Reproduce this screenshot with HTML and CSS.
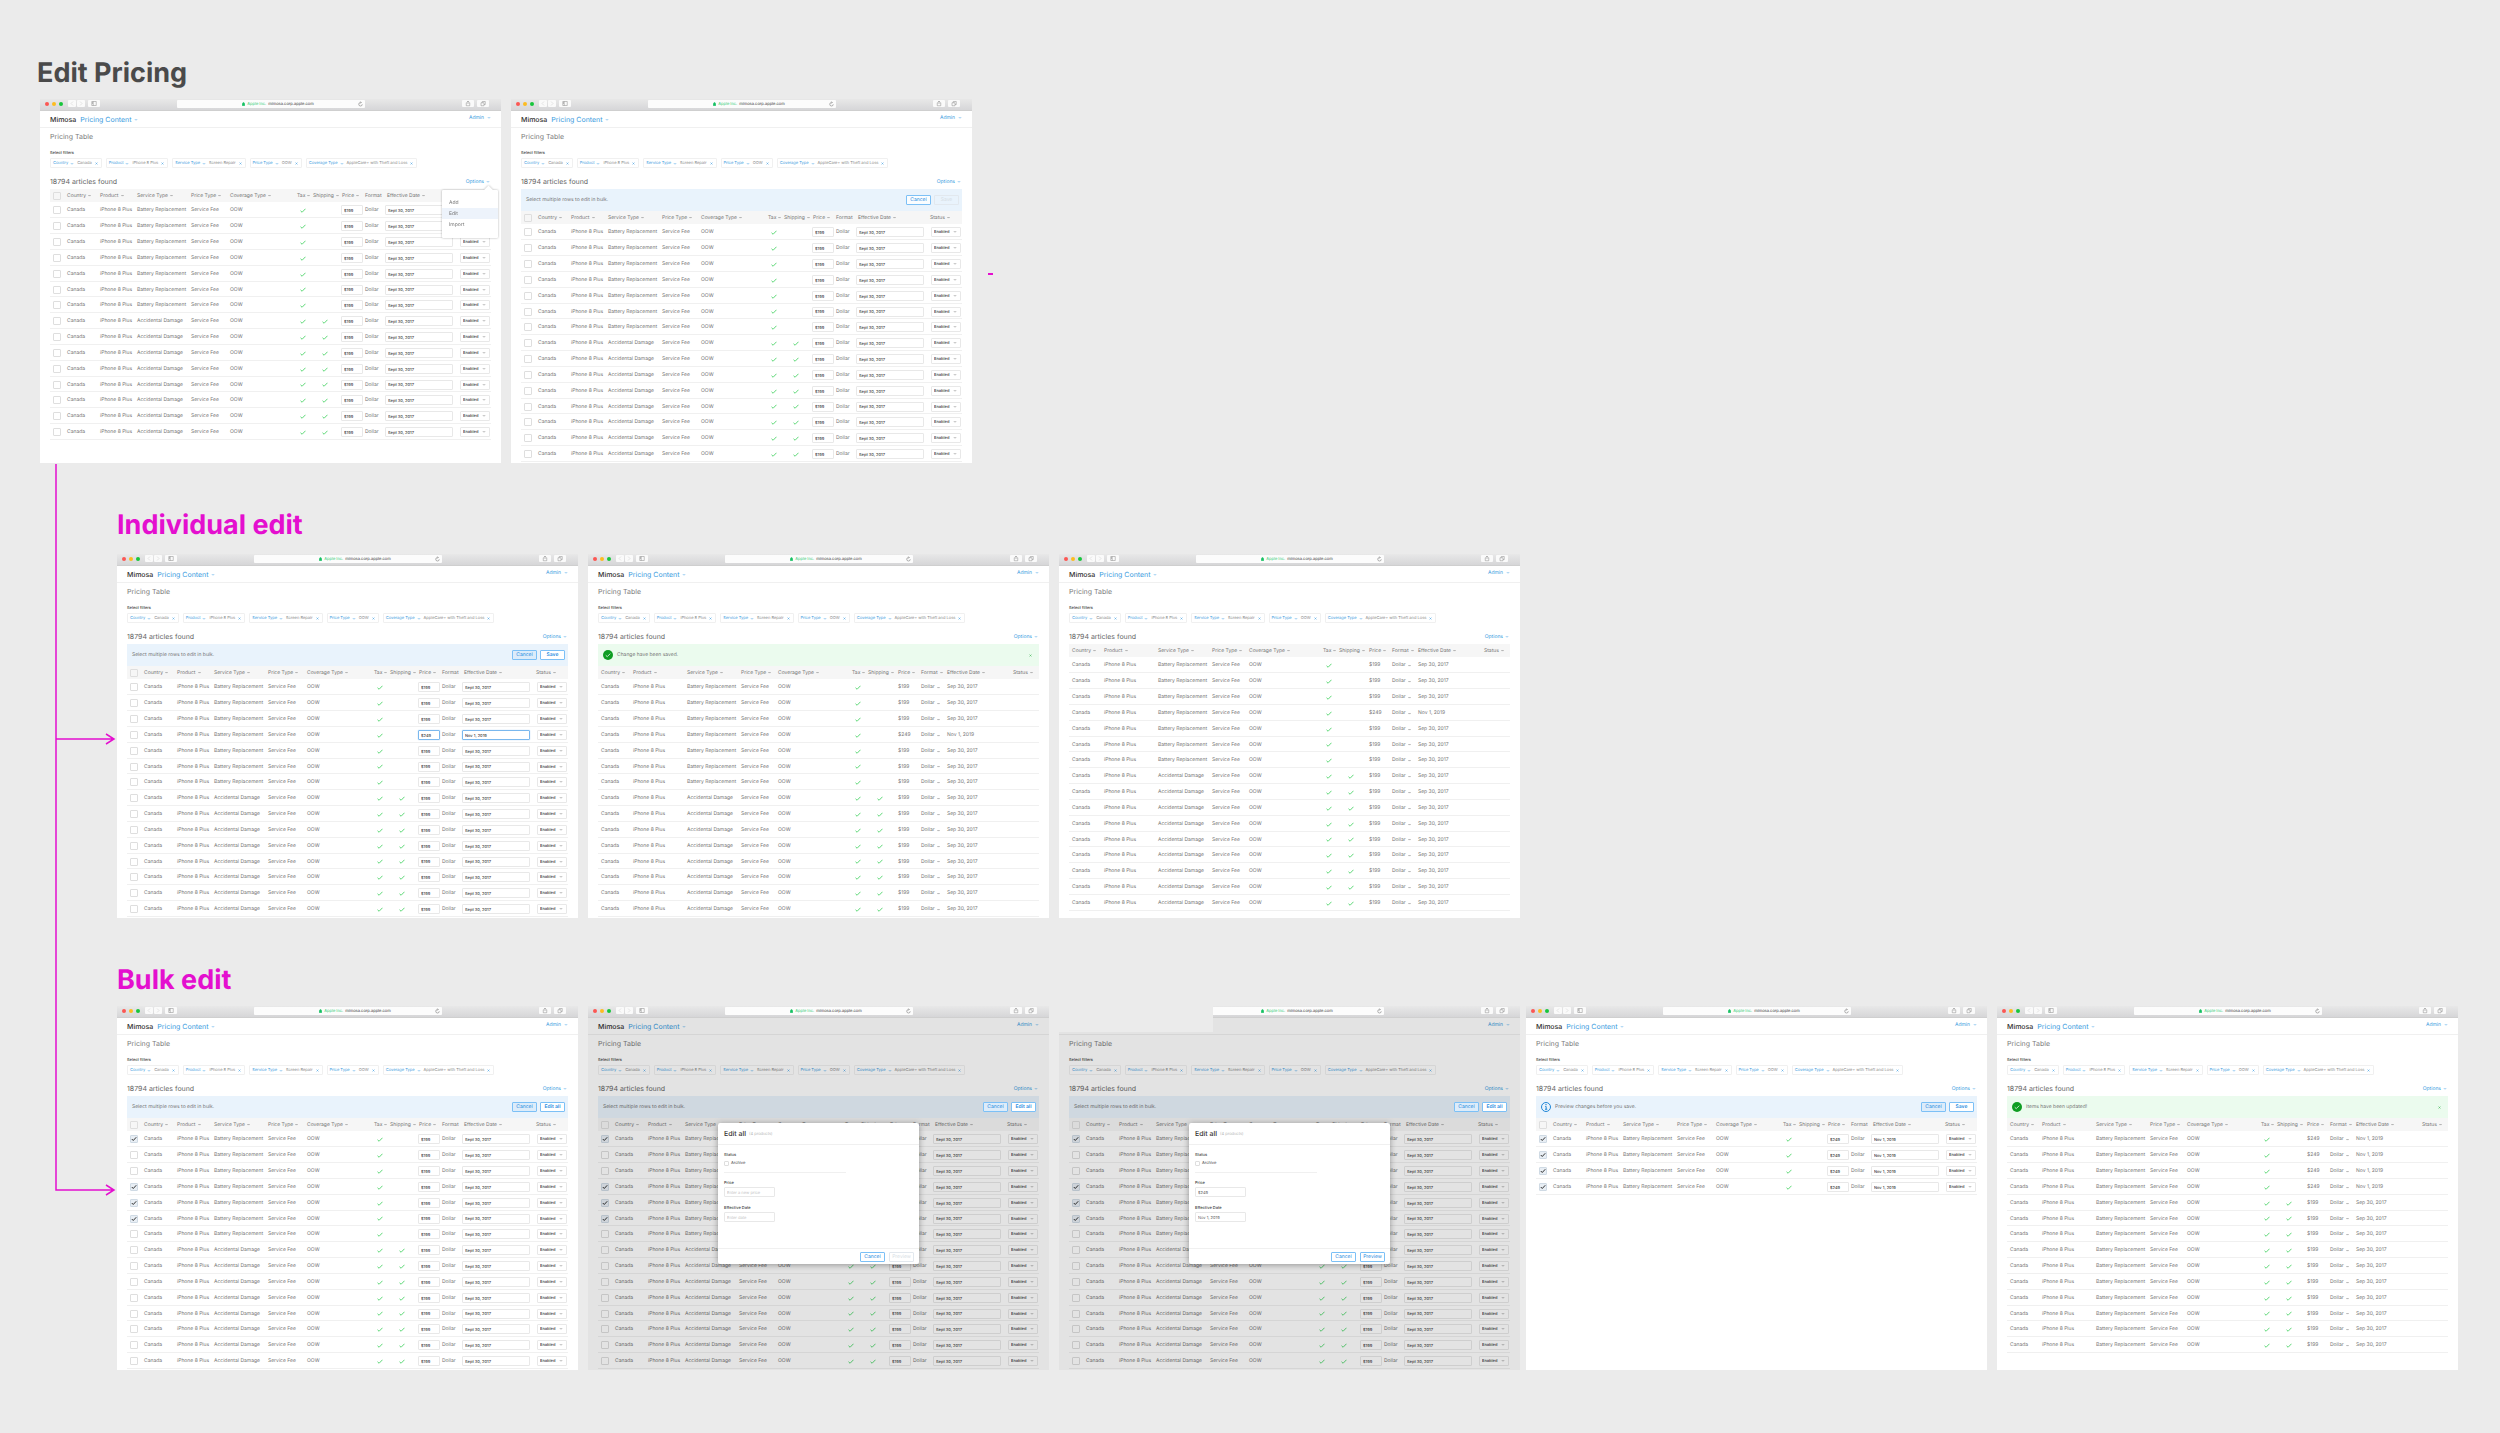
FILE: index.html
```html
<!DOCTYPE html>
<html lang="en">
<head>
<meta charset="utf-8">
<meta name="viewport" content="width=device-width, initial-scale=1">
<title>Edit Pricing</title>
<link rel="stylesheet" href="styles.css">
</head>
<body>
<svg class="sprite" aria-hidden="true">
  <symbol id="chevron" viewBox="0 0 8 6"><path d="M1.500 2l2.500 2.500L6.500 2"/></symbol>
  <symbol id="cross" viewBox="0 0 6 6"><path d="M1 1l4 4M5 1l-4 4"/></symbol>
  <symbol id="tick" viewBox="0 0 12 10"><path d="M1 5.500l3.200 3L11 1.500"/></symbol>
  <symbol id="back" viewBox="0 0 16 14"><path d="M10 3L6 7l4 4"/></symbol>
  <symbol id="forward" viewBox="0 0 16 14"><path d="M6 3l4 4-4 4"/></symbol>
  <symbol id="sidebar" viewBox="0 0 24 14"><path d="M7.500 3h9v8h-9zM10.500 3v8M8 5h2M8 7h2"/></symbol>
  <symbol id="share" viewBox="0 0 24 14"><path d="M10.500 5.500h-2v6h7v-6h-2M12 8V2M10 4l2-2 2 2"/></symbol>
  <symbol id="tabs" viewBox="0 0 24 14"><path d="M8 5.500h6v6H8zM10.500 5.500V3h6v6H14"/></symbol>
  <symbol id="lock" viewBox="0 0 6 8"><path d="M1.500 4V2.500a1.500 1.500 0 013 0V4"/><rect x="0.500" y="3.500" width="5" height="4" rx="0.500"/></symbol>
  <symbol id="reload" viewBox="0 0 10 12"><path d="M8.500 6.500a3.500 3.500 0 11-3.500-3.500h1M4.800 1l2 2-2 2"/></symbol>
  <symbol id="success" viewBox="0 0 20 20"><circle cx="10" cy="10" r="10" stroke="none"/><path d="M5.500 10.500l3 2.800 6-6" fill="none"/></symbol>
  <symbol id="info" viewBox="0 0 20 20"><circle cx="10" cy="10" r="9"/><path d="M8.500 9h1.800v5.200M8 14.500h4.500"/><circle cx="10" cy="5.500" r="0.600"/></symbol>
</svg>

<main class="canvas">
  <section class="flow flow--start">
    <h1 class="flow__title">Edit Pricing</h1>
    <div class="flow__screens">
      <article class="board" data-screen="options"></article>
      <article class="board" data-screen="selecting"></article>
      <span class="stub"></span>
    </div>
  </section>

  <section class="flow flow--individual">
    <h2 class="flow__title">Individual edit</h2>
    <div class="flow__screens">
      <article class="board" data-screen="editingOne"></article>
      <article class="board" data-screen="savedOne"></article>
      <article class="board" data-screen="listing"></article>
    </div>
  </section>

  <section class="flow flow--bulk">
    <h2 class="flow__title">Bulk edit</h2>
    <div class="flow__screens">
      <article class="board" data-screen="picked"></article>
      <article class="board" data-screen="bulkEmpty"></article>
      <article class="board board--covered" data-screen="bulkFilled"></article>
      <article class="board board--next" data-screen="preview"></article>
      <article class="board" data-screen="updated"></article>
    </div>
  </section>

  <svg class="connector" viewBox="0 0 62 732" aria-hidden="true">
    <path d="M2 0v726h58M2 275h58M52 270l8 5-8 5M52 721l8 5-8 5"/>
  </svg>
</main>
<script src="app.js"></script>
</body>
</html>
```

FILE: app.js
```js
const icon = (name) =>
  `<svg class="icon icon--${name}" aria-hidden="true"><use href="#${name}"/></svg>`;

const FILTERS = [
  ["Country", "Canada"],
  ["Product", "iPhone 8 Plus"],
  ["Service Type", "Screen Repair"],
  ["Price Type", "OOW"],
  ["Coverage Type", "AppleCare+ with Theft and Loss"],
];

const COLUMNS = [
  ["country", "Country"], ["product", "Product"], ["service", "Service Type"],
  ["type", "Price Type"], ["coverage", "Coverage Type"], ["tax", "Tax"],
  ["shipping", "Shipping"], ["price", "Price"], ["format", "Format"],
  ["date", "Effective Date"], ["status", "Status"],
];

const battery = (n, extra = {}) =>
  Array.from({ length: n }, () => ({ service: "Battery Replacement", ...extra }));
const damage = (n) =>
  Array.from({ length: n }, () => ({ service: "Accidental Damage", shipping: true }));
const CHANGED = { price: "$249", date: "Nov 1, 2019" };

const change = (rows, indexes, extra) =>
  rows.map((row, i) => (indexes.includes(i) ? { ...row, ...extra } : row));

const fifteen = [...battery(7), ...damage(8)];
const picked = change(fifteen, [0, 3, 4, 5], { checked: true });
const bulkHint = "Select multiple rows to edit in bulk.";

const SCREENS = {
  options: { edit: true, rows: fifteen, menu: true },
  selecting: { edit: true, rows: fifteen, banner: { text: bulkHint, action: "Save", disabled: true } },
  editingOne: {
    edit: true,
    rows: change(fifteen, [3], { ...CHANGED, focus: true }),
    banner: { text: bulkHint, action: "Save" },
  },
  savedOne: { rows: change(fifteen, [3], CHANGED), banner: { kind: "success", text: "Change have been saved." } },
  listing: { rows: change([...battery(7), ...damage(9)], [3], CHANGED) },
  picked: { edit: true, rows: picked, banner: { text: bulkHint, action: "Edit all" } },
  bulkEmpty: { edit: true, rows: picked, banner: { text: bulkHint, action: "Edit all" }, modal: { price: "", date: "" } },
  bulkFilled: { edit: true, rows: picked, banner: { text: bulkHint, action: "Edit all" }, modal: CHANGED },
  preview: {
    edit: true,
    rows: battery(4, { ...CHANGED, checked: true }),
    banner: { kind: "info", text: "Preview changes before you save.", action: "Save" },
  },
  updated: {
    rows: [...battery(4, CHANGED), ...battery(10, { shipping: true })],
    banner: { kind: "success", text: "Items have been updated!" },
  },
};

const chrome = () => `
  <div class="chrome">
    <div class="chrome__left">
      <span class="lights"><i class="light light--close"></i><i class="light light--min"></i><i class="light light--max"></i></span>
      <span class="chrome__nav">
        <button class="tool tool--small" aria-label="Back">${icon("back")}</button>
        <button class="tool tool--small" aria-label="Forward">${icon("forward")}</button>
      </span>
      <button class="tool" aria-label="Sidebar">${icon("sidebar")}</button>
    </div>
    <div class="address">
      ${icon("lock")}<span class="address__owner">Apple Inc.</span><span>mimosa.corp.apple.com</span>
      <button class="address__reload" aria-label="Reload">${icon("reload")}</button>
    </div>
    <div class="chrome__right">
      <button class="tool" aria-label="Share">${icon("share")}</button>
      <button class="tool" aria-label="Tabs">${icon("tabs")}</button>
    </div>
  </div>`;

const filter = ([name, value]) => `
  <li class="chip">
    <button class="link chip__name">${name}${icon("chevron")}</button>
    <span class="chip__value">${value}</span>
    <button class="link chip__remove" aria-label="Remove ${name}">${icon("cross")}</button>
  </li>`;

const menu = () => `
  <div class="menu">
    <button class="menu__item">Add</button>
    <button class="menu__item menu__item--active">Edit</button>
    <button class="menu__item">Import</button>
  </div>`;

const banner = ({ kind = "hint", text, action, disabled }) => `
  <div class="banner banner--${kind}">
    ${kind === "hint" ? "" : icon(kind)}
    <p class="banner__text">${text}</p>
    ${action
      ? `<div class="actions">
          <button class="button button--tint${disabled ? " button--plain" : ""}">Cancel</button>
          <button class="button button--strong"${disabled ? " disabled" : ""}>${action}</button>
        </div>`
      : `<button class="banner__close" aria-label="Dismiss">${icon("cross")}</button>`}
  </div>`;

const headCell = (edit) => ([key, name]) =>
  `<th class="col-${key}" scope="col">${
    edit && key === "format" ? name : `<button class="sort">${name}${icon("chevron")}</button>`
  }</th>`;

const row = (edit) => (data) => {
  const price = data.price || "$199";
  const date = data.date || (edit ? "Sept 30, 2017" : "Sep 30, 2017");
  const focus = data.focus ? " field--focus" : "";
  return `<tr>
    ${edit ? `<td class="col-check"><input class="check" type="checkbox" aria-label="Select row"${data.checked ? " checked" : ""}></td>` : ""}
    <td class="col-country">Canada</td>
    <td class="col-product">iPhone 8 Plus</td>
    <td class="col-service">${data.service}</td>
    <td class="col-type">Service Fee</td>
    <td class="col-coverage">OOW</td>
    <td class="col-tax">${icon("tick")}</td>
    <td class="col-shipping">${data.shipping ? icon("tick") : ""}</td>
    ${edit
      ? `<td class="col-price"><input class="field${focus}" type="text" aria-label="Price" value="${price}"></td>
         <td class="col-format">Dollar</td>
         <td class="col-date"><input class="field${focus}" type="text" aria-label="Effective date" value="${date}"></td>
         <td class="col-status"><span class="picker"><select class="field" aria-label="Status"><option>Enabled</option><option>Disabled</option></select>${icon("chevron")}</span></td>`
      : `<td class="col-price">${price}</td>
         <td class="col-format"><button class="sort">Dollar${icon("chevron")}</button></td>
         <td class="col-date">${date}</td>
         <td class="col-status"></td>`}
  </tr>`;
};

const table = ({ edit, rows }) => `
  <table class="prices ${edit ? "prices--edit" : "prices--read"}">
    <thead><tr>
      ${edit ? `<th class="col-check"><input class="check" type="checkbox" aria-label="Select all rows"></th>` : ""}
      ${COLUMNS.map(headCell(edit)).join("")}
    </tr></thead>
    <tbody>${rows.map(row(edit)).join("")}</tbody>
  </table>`;

const modal = ({ price, date }, id) => `
  <div class="shade">
    <form class="modal">
      <header class="modal__head"><h3 class="modal__title">Edit all</h3><span class="modal__count">(4 products)</span></header>
      <div class="modal__body">
        <p class="modal__label">Status</p>
        <label class="modal__option"><input class="check check--small" type="checkbox">Archive</label>
        <label class="modal__label" for="${id}-price">Price</label>
        <input class="field" id="${id}-price" type="text" placeholder="Enter a new price" value="${price}">
        <label class="modal__label" for="${id}-date">Effective Date</label>
        <input class="field" id="${id}-date" type="text" placeholder="Enter date" value="${date}">
      </div>
      <footer class="modal__foot">
        <button type="button" class="button">Cancel</button>
        <button type="button" class="button"${price ? "" : " disabled"}>Preview</button>
      </footer>
    </form>
  </div>`;

document.querySelectorAll("[data-screen]").forEach((board) => {
  const id = board.dataset.screen;
  const screen = SCREENS[id];
  board.innerHTML = `
    ${chrome()}
    <header class="top">
      <span class="top__brand">Mimosa</span>
      <a class="top__section" href="#">Pricing Content${icon("chevron")}</a>
      <a class="top__account" href="#">Admin${icon("chevron")}</a>
    </header>
    <div class="content">
      <h3 class="content__title">Pricing Table</h3>
      <p class="content__label">Select filters</p>
      <ul class="chips">${FILTERS.map(filter).join("")}</ul>
      <div class="results">
        <span class="results__count">18794 articles found</span>
        <button class="link results__options">Options${icon("chevron")}</button>
        ${screen.menu ? menu() : ""}
      </div>
      ${screen.banner ? banner(screen.banner) : ""}
      ${table(screen)}
    </div>
    ${screen.modal ? modal(screen.modal, id) : ""}`;
});
```

FILE: styles.css
```css
:root {
  --canvas: #ebebeb;
  --magenta: #e40fcf;
  --blue: #3a9be0;
  --text: #757575;
  --line: #f0f0f0;
  --board: calc((100vw - 195px) / 5);
}

*, *::before, *::after { box-sizing: border-box; }

body {
  margin: 0;
  background: var(--canvas);
  color: var(--text);
  font-family: Inter, "Liberation Sans", sans-serif;
  font-size: 5px;
  line-height: 8px;
  text-rendering: geometricPrecision;
}

h1, h2, h3, p, ul { margin: 0; padding: 0; }
ul { list-style: none; }
a { color: var(--blue); text-decoration: none; }
button, input, select { font: inherit; color: inherit; margin: 0; text-rendering: inherit; }
button { padding: 0; border: 0; background: none; text-align: left; }

.sprite { position: absolute; width: 0; height: 0; }
.icon { flex: none; fill: none; stroke: currentColor; }
.icon--chevron { width: 4px; height: 3px; stroke-width: 1; }
.icon--cross { width: 3px; height: 3px; stroke-width: 1; }
.icon--tick { width: 6px; height: 5px; stroke: #5fd878; stroke-width: 2; }

/* Canvas and flows */
.canvas {
  position: relative;
  display: flex;
  flex-direction: column;
  gap: 48px;
  padding: 59px 0 63px;
}
.flow { padding-left: 117px; }
.flow--start { padding-left: 40px; }
.flow__title {
  margin: 0 0 12px;
  color: var(--magenta);
  font-size: 27px;
  font-weight: 700;
  line-height: 28px;
}
.flow--start .flow__title { margin-left: -3px; color: #4a4a4a; }
.flow--individual .flow__title { margin-bottom: 15px; }
.flow__screens { position: relative; display: flex; gap: 6px; }

.connector {
  position: absolute;
  left: 54px;
  top: 464px;
  width: 62px;
  height: 732px;
  fill: none;
  stroke: var(--magenta);
  stroke-width: 1.500;
}
.stub {
  align-self: center;
  width: 5px;
  height: 2px;
  margin: -14px 0 0 10px;
  background: var(--magenta);
}

/* Board */
.board {
  position: relative;
  flex: 0 0 var(--board);
  min-width: 0;
  min-height: 364px;
  background: #fff;
}
.board + .board { margin-left: 4px; }
.board + .board--next { margin-left: 0; }
.board--covered::after {
  content: "";
  position: absolute;
  z-index: 3;
  top: 0;
  left: 0;
  width: calc(100% / 3);
  height: 26px;
  background: var(--canvas);
}

/* Browser chrome */
.chrome {
  display: grid;
  grid-template-columns: 1fr minmax(0, 188px) 1fr;
  align-items: start;
  height: 12px;
  padding-top: 1px;
  border-bottom: 1px solid #cfcfcf;
  background: linear-gradient(#e8e8e8, #d6d6d8);
}
.chrome__left { display: flex; align-items: center; gap: 3px; padding-left: 5px; }
.chrome__right { display: flex; justify-content: flex-end; gap: 3px; padding-right: 12px; }
.chrome__nav { display: flex; gap: 1px; margin-left: 2px; }
.lights { display: flex; gap: 3px; }
.light { width: 4px; height: 4px; border-radius: 50%; }
.light--close { background: #fc5753; }
.light--min { background: #fdbc20; }
.light--max { background: #17c63b; }
.tool { width: 12px; height: 7px; border-radius: 1px; background: #fafafa; color: #888; }
.tool--small { width: 8px; color: #ccc; }
.tool .icon { display: block; width: 100%; height: 7px; }
.address {
  position: relative;
  display: flex;
  align-items: center;
  justify-content: center;
  gap: 2px;
  height: 8px;
  padding-left: 15px;
  border-radius: 1px;
  background: #fcfcfc;
  color: #333;
  font-size: 4px;
}
.address__owner { color: #2fcc71; }
.icon--lock { width: 3px; height: 4px; fill: #17c264; color: #17c264; }
.address__reload { position: absolute; right: 2px; top: 1px; height: 6px; color: #666; }
.icon--reload { display: block; width: 5px; height: 6px; }

/* App header */
.top {
  display: flex;
  align-items: center;
  gap: 4px;
  height: 17px;
  padding: 1px 10px 0;
  border-bottom: 1px solid var(--line);
  font-size: 7px;
}
.top__brand { color: #333; font-weight: 500; }
.top a { display: flex; align-items: center; gap: 2px; }
.top .top__account { margin: 0 0 4px auto; gap: 3px; font-size: 5px; }

.content { padding: 4px 10px 0; }
.content__title { color: #7c7c7c; font-size: 7px; font-weight: 400; line-height: 10px; }
.content__label { margin: 7px 0 1px; color: #444; font-size: 4px; font-weight: 500; }

.chips { display: flex; gap: 4px; }
.chip {
  display: flex;
  align-items: center;
  gap: 3px;
  height: 10px;
  padding: 0 3px 0 2px;
  border: 1px solid var(--line);
  border-radius: 1px;
  color: #888;
  font-size: 4px;
  white-space: nowrap;
}
.link { color: var(--blue); }
.chip__name, .chip__remove, .results__options { display: flex; align-items: center; gap: 2px; }

.results {
  position: relative;
  display: flex;
  align-items: center;
  justify-content: space-between;
  height: 15px;
  margin-top: 6px;
  padding-right: 1px;
}
.results__count { color: #666; font-size: 7px; }

/* Options menu */
.menu {
  position: absolute;
  z-index: 1;
  top: 16px;
  right: -7px;
  width: 56px;
  padding: 7px 0 8px;
  border-radius: 1px;
  background: #fff;
  filter: drop-shadow(0 0 1px rgba(0, 0, 0, .3));
}
.menu::before {
  content: "";
  position: absolute;
  top: -3px;
  right: 6px;
  width: 7px;
  height: 7px;
  background: #fff;
  transform: rotate(45deg);
}
.menu__item { position: relative; display: block; width: 100%; height: 11px; padding-left: 7px; }
.menu__item--active { background: #edf3fb; }

/* Banner */
.banner {
  display: flex;
  align-items: center;
  gap: 4px;
  height: 22px;
  padding: 0 3px 0 5px;
  background: #e9f3fc;
}
.banner--success { background: #ebfbee; }
.icon--success, .icon--info { width: 10px; height: 10px; }
.icon--success { fill: #0f9d23; color: #fff; stroke-width: 1.500; }
.icon--info { color: #1f86d6; stroke-width: 2; }
.actions { position: relative; z-index: 2; display: flex; gap: 3px; margin-left: auto; }
.banner__close { display: flex; margin: 0 4px 0 auto; color: #2fae45; }

.button {
  width: 25px;
  height: 10px;
  border: 1px solid #7cc0f6;
  border-radius: 1px;
  background: #fff;
  color: #1f8be0;
  line-height: 8px;
  text-align: center;
}
.button--tint { background: #dcecfa; }
.button--plain { background: #fafdff; }
.button--strong { font-weight: 600; }
.button:disabled { border-color: #e2e8ee; background: transparent; color: #d6dde4; font-weight: 400; }

/* Table */
.prices { width: 100%; border-collapse: collapse; table-layout: fixed; }
.prices th, .prices td { height: 16px; padding: 0; text-align: left; vertical-align: middle; white-space: nowrap; }
.prices th { height: 13px; background: #f6f6f6; font-weight: 400; }
.prices tbody tr { box-shadow: inset 0 -1px var(--line); }
.prices tbody tr:nth-child(6n) td { height: 15px; }
.prices .icon--tick, .prices .check { display: block; }
.sort { display: flex; align-items: center; gap: 2px; }
.sort .icon--chevron { width: 3px; stroke-width: 2; }

.prices--edit .col-check { width: 17px; padding-left: 3px; }
.prices--edit .col-country { width: 33px; }
.prices--edit .col-product { width: 37px; }
.prices--edit .col-service { width: 54px; }
.prices--edit .col-type { width: 39px; }
.prices--edit .col-coverage { width: auto; }
.prices--edit .col-tax { width: 16px; }
.prices--edit .col-shipping { width: 27px; }
.prices--edit .col-price { width: 25px; }
.prices--edit .col-format { width: 20px; }
.prices--edit .col-date { width: 74px; }
.prices--edit .col-status { width: 32px; }
.prices--edit th.col-price, .prices--edit th.col-date { padding-left: 2px; }
.prices--edit td.col-price { padding: 0 2px 0 1px; }
.prices--edit td.col-date { padding-right: 6px; }
.prices--edit td.col-status { padding: 0 1px; }

.prices--read .col-country { width: 35px; padding-left: 3px; }
.prices--read .col-product { width: 54px; }
.prices--read .col-service { width: 54px; }
.prices--read .col-type { width: 37px; }
.prices--read .col-coverage { width: auto; }
.prices--read .col-tax { width: 16px; }
.prices--read .col-shipping { width: 30px; }
.prices--read .col-price { width: 23px; }
.prices--read .col-format { width: 26px; }
.prices--read .col-date { width: 66px; }
.prices--read .col-status { width: 26px; }

.prices td.col-tax { padding-left: 3px; }
.prices td.col-shipping { padding-left: 9px; }

.field {
  display: block;
  width: 100%;
  height: 10px;
  padding: 0 2px;
  border: 1px solid #e8e8e8;
  border-radius: 1px;
  outline: 0;
  background: transparent;
  color: #444;
  font-size: 4px;
  font-weight: 500;
  line-height: 8px;
  appearance: none;
}
.field--focus { border-color: #7ab8ee; box-shadow: 0 0 1px #7ab8ee; }
.field::placeholder { color: #c4c4c4; opacity: 1; }
.picker { position: relative; display: block; }
.picker .icon { position: absolute; right: 4px; top: 3px; }

.check {
  width: 8px;
  height: 8px;
  border: 1px solid #dedede;
  border-radius: 1px;
  background: transparent;
  appearance: none;
}
.check:checked {
  border-color: #cfdae4;
  background: #e8eef4 url("data:image/svg+xml,%3Csvg xmlns='http://www.w3.org/2000/svg' viewBox='0 0 12 12' fill='none' stroke='%23333' stroke-width='2'%3E%3Cpath d='M1.500 6l3 3 6-6.500'/%3E%3C/svg%3E") center / 6px 6px no-repeat;
}
.check--small { width: 5px; height: 5px; }

/* Bulk edit dialog */
.shade {
  position: absolute;
  z-index: 1;
  inset: 12px 0 0;
  display: flex;
  justify-content: center;
  align-items: flex-start;
  padding-top: 105px;
  background: rgba(0, 0, 0, .11);
}
.modal {
  display: flex;
  flex-direction: column;
  width: 201px;
  min-height: 141px;
  border-radius: 2px;
  background: #fff;
  box-shadow: 0 1px 6px rgba(0, 0, 0, .35);
}
.modal__head {
  display: flex;
  align-items: center;
  gap: 3px;
  height: 22px;
  padding: 0 6px;
  border-bottom: 1px solid var(--line);
}
.modal__title { color: #333; font-size: 7px; font-weight: 500; }
.modal__count { color: #b4b4b4; font-size: 4px; }
.modal__body { flex: 1; padding: 6px 6px 0; }
.modal__body .field { width: 51px; color: #666; font-weight: 400; margin-bottom: 7px; }
.modal__label { display: block; color: #444; font-size: 4px; font-weight: 500; }
.modal__option {
  display: flex;
  align-items: center;
  gap: 2px;
  width: 122px;
  height: 14px;
  margin-bottom: 6px;
  padding-bottom: 5px;
  border-bottom: 1px solid var(--line);
  color: #444;
  font-size: 4px;
}
.modal__foot {
  display: flex;
  justify-content: flex-end;
  align-items: center;
  gap: 4px;
  height: 16px;
  padding-right: 5px;
  border-top: 1px solid var(--line);
}
```
